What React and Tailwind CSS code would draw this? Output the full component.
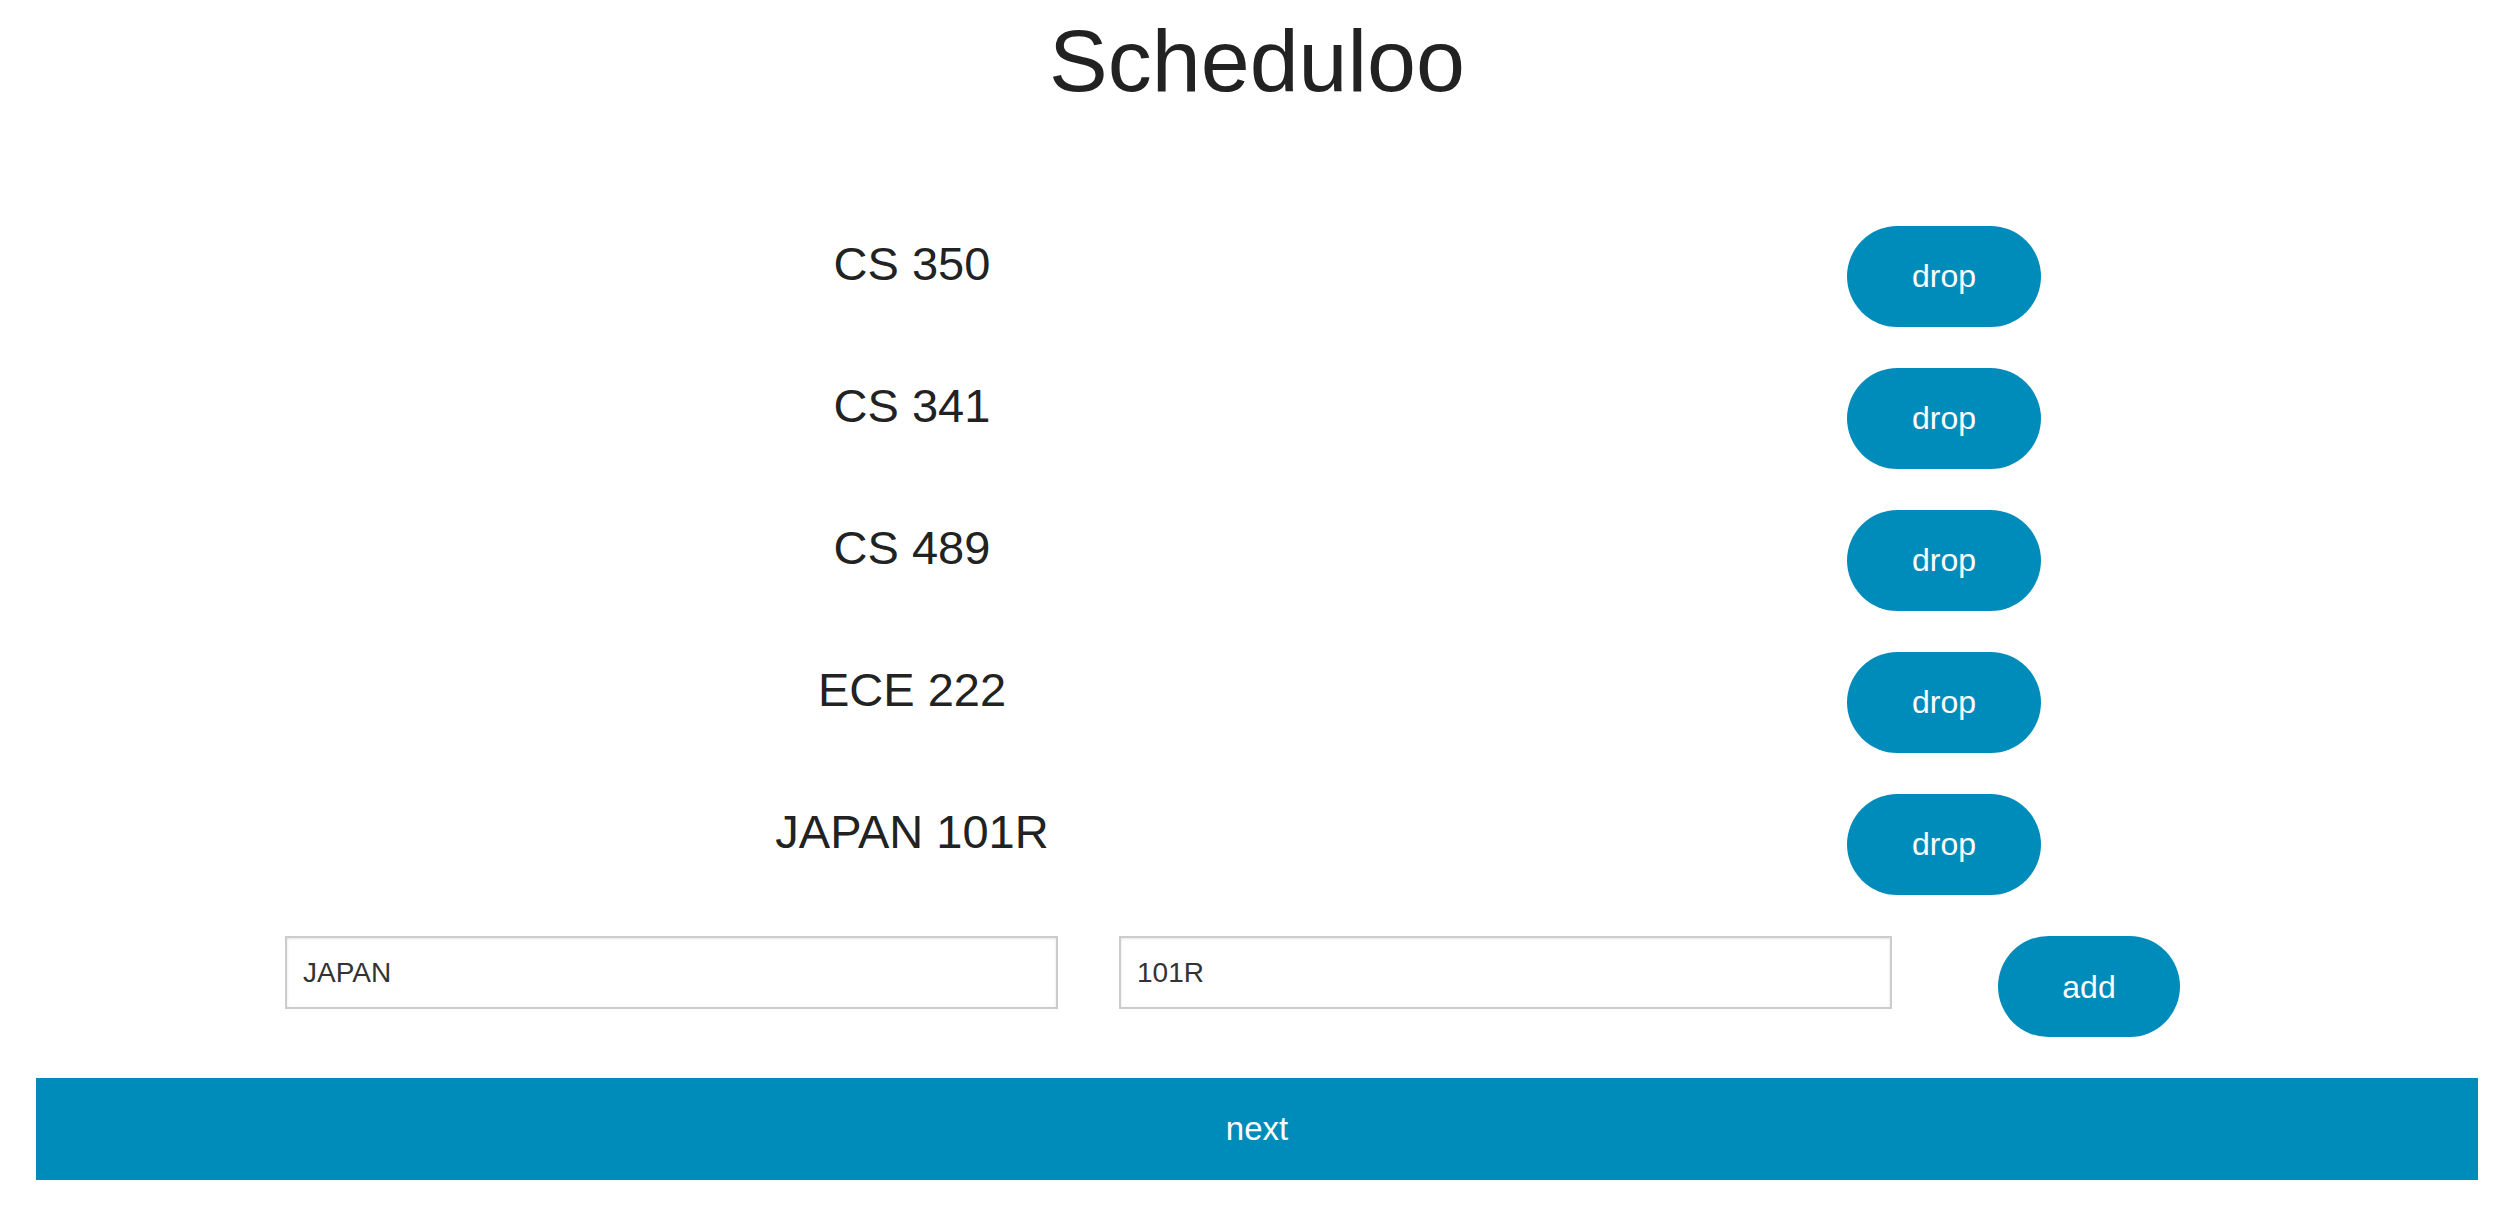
import React from "react";

const courses = ["CS 350", "CS 341", "CS 489", "ECE 222", "JAPAN 101R"];

export default function App() {
  return (
    <div
      className="w-[2514px] h-[1208px] bg-white text-[#222222] overflow-hidden"
      style={{ fontFamily: '"Liberation Sans", Arial, sans-serif' }}
    >
      <h1 className="h-[205px] pt-[17px] text-center text-[88px] leading-none font-normal">
        Scheduloo
      </h1>
      <div className="flex flex-col">
        {courses.map((c) => (
          <div key={c} className="flex items-center h-[142px]">
            <div className="ml-[396px] w-[1032px] text-center text-[47px] leading-none mb-[26px]">
              {c}
            </div>
            <div className="w-[1032px] flex justify-center">
              <button className="w-[194px] h-[101px] rounded-full bg-[#008cba] text-white text-[32px] leading-none">
                drop
              </button>
            </div>
          </div>
        ))}
      </div>
      <div className="flex items-start mt-[21px] h-[101px]">
        <input
          className="ml-[285px] w-[773px] h-[73px] border-2 border-[#cccccc] px-[16px] text-[28px] text-[#333333] shadow-[inset_0_1px_3px_rgba(0,0,0,0.1)] outline-none"
          defaultValue="JAPAN"
        />
        <input
          className="ml-[61px] w-[773px] h-[73px] border-2 border-[#cccccc] px-[16px] text-[28px] text-[#333333] shadow-[inset_0_1px_3px_rgba(0,0,0,0.1)] outline-none"
          defaultValue="101R"
        />
        <button className="ml-[106px] w-[182px] h-[101px] rounded-full bg-[#008cba] text-white text-[32px] leading-none">
          add
        </button>
      </div>
      <div className="mt-[41px] mx-[36px] h-[102px] bg-[#008cba] flex items-center justify-center text-white text-[33px]">
        next
      </div>
    </div>
  );
}
